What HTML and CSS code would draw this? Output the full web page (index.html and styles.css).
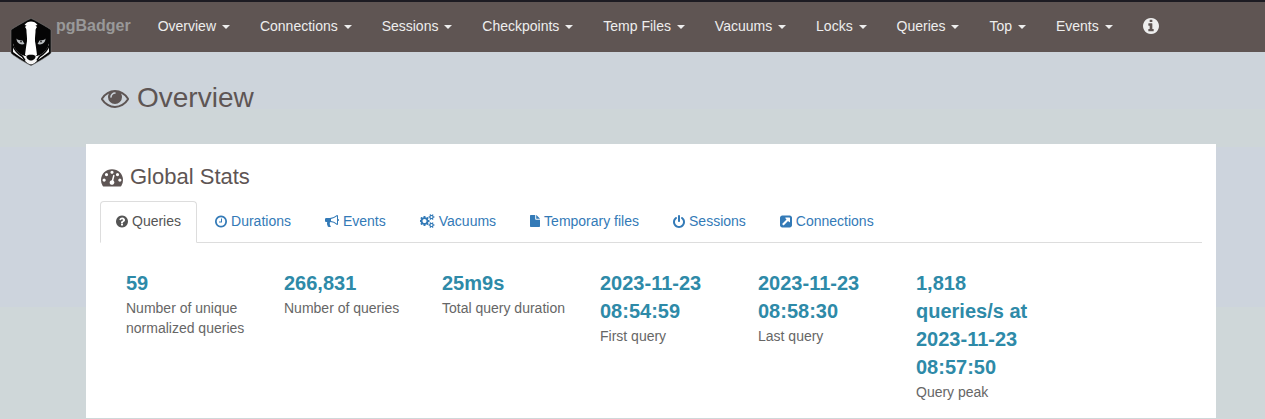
FILE: index.html
```
<!DOCTYPE html>
<html lang="en">
<head>
<meta charset="utf-8">
<title>pgBadger</title>
<link rel="stylesheet" href="styles.css">
</head>
<body>
<header class="navbar">
  <a class="brand" href="#">
    <svg class="logo" viewBox="0 0 42 48" aria-hidden="true">
      <path d="M21 .5C22 .5 40 10.500 41 12v23c-1 2-19 12.500-20 12.500S2 37 1 35V12C2 10.500 20 .5 21 .5z" fill="#050505" stroke="#777" stroke-width=".6"/>
      <path d="M21 3.500c-2.500 0-5 1-6.500 3.500l2 .5-1.500 1.500c1.500 1.500 1.500 3 1.500 5 .4 5 1 8 0 12-.5 3-1 7-1.500 11h12c-.5-4-1-8-1.500-11-1-4-.4-7 0-12 0-2 0-3.500 1.500-5l-1.500-1.500 2-.5c-1.500-2.500-4-3.500-6.500-3.500z" fill="#fff"/>
      <path d="M3 25.500V34c3.500 3 7.500 5 11 8 2 2 4.500 4.500 7 4.500s5-2.500 7-4.500c3.500-3 7.500-5 11-8v-8.500c-1 5-4.500 8.500-8 11L27 38l-3-2h-6l-3 2-4-1.500c-3.500-2.500-7-6-8-11z" fill="#f5f5f5"/>
      <path d="M3 27.500c1.500 5 5.500 8.500 9.500 11l2.500 4M39 27.500c-1.500 5-5.500 8.500-9.500 11l-2.500 4" fill="none" stroke="#080808" stroke-width="1.500"/>
      <path d="M16.500 38c1.500-1.600 7.500-1.600 9 0 .4 2-1.700 4.500-4.500 4.500s-4.900-2.500-4.500-4.500z" fill="#080808"/>
      <path d="M6.500 20.500c1 1.500 3 1.500 6 2L14.500 26c-4 1.500-8-1-8-5.500zM35.500 20.500c-1 1.500-3 1.500-6 2L27.500 26c4 1.500 8-1 8-5.500z" fill="#b9bdc0"/>
      <circle cx="11" cy="23.500" r="1" fill="#333"/>
      <circle cx="31" cy="23.500" r="1" fill="#333"/>
    </svg>
    <span>pgBadger</span>
  </a>
  <nav class="menu" aria-label="Main">
    <a href="#">Overview <b class="caret"></b></a>
    <a href="#">Connections <b class="caret"></b></a>
    <a href="#">Sessions <b class="caret"></b></a>
    <a href="#">Checkpoints <b class="caret"></b></a>
    <a href="#">Temp Files <b class="caret"></b></a>
    <a href="#">Vacuums <b class="caret"></b></a>
    <a href="#">Locks <b class="caret"></b></a>
    <a href="#">Queries <b class="caret"></b></a>
    <a href="#">Top <b class="caret"></b></a>
    <a href="#">Events <b class="caret"></b></a>
    <a class="about" href="#" aria-label="About"><svg viewBox="128 128 1536 1536"><path d="M1152 1376v-160q0-14-9-23t-23-9h-96v-512q0-14-9-23t-23-9h-320q-14 0-23 9t-9 23v160q0 14 9 23t23 9h96v320h-96q-14 0-23 9t-9 23v160q0 14 9 23t23 9h448q14 0 23-9t9-23zm-128-896v-160q0-14-9-23t-23-9h-192q-14 0-23 9t-9 23v160q0 14 9 23t23 9h192q14 0 23-9t9-23zm640 416q0 209-103 385.500t-279.500 279.500-385.500 103-385.500-103-279.500-279.500-103-385.500 103-385.500 279.500-279.500 385.500-103 385.500 103 279.500 279.500 103 385.500z"/></svg></a>
  </nav>
</header>

<main class="content">
  <h1 class="page-title">
    <svg class="icon" viewBox="0 0 1792 1792" aria-hidden="true"><path d="M1664 960q-152-236-381-353 61 104 61 225 0 185-131.500 316.500t-316.500 131.500-316.500-131.500-131.500-316.500q0-121 61-225-229 117-381 353 133 205 333.500 326.500t434.500 121.500 434.500-121.500 333.500-326.500zm-720-384q0-20-14-34t-34-14q-125 0-214.500 89.500t-89.500 214.500q0 20 14 34t34 14 34-14 14-34q0-86 61-147t147-61q20 0 34-14t14-34zm848 384q0 34-20 69-140 230-376.500 368.500t-499.500 138.500-499.500-139-376.500-368q-20-35-20-69t20-69q140-229 376.500-368t499.500-139 499.500 139 376.500 368q20 35 20 69z"/></svg>
    <span>Overview</span>
  </h1>

  <section class="panel">
    <h2 class="panel-title">
      <svg class="icon" viewBox="0 0 1792 1792" aria-hidden="true"><path d="M384 1152q0-53-37.500-90.500t-90.500-37.500-90.500 37.500-37.500 90.500 37.500 90.500 90.500 37.500 90.500-37.500 37.500-90.500zm192-448q0-53-37.500-90.500t-90.500-37.500-90.500 37.500-37.500 90.500 37.500 90.500 90.500 37.500 90.500-37.500 37.500-90.500zm428 481l101-382q6-26-7.500-48.500t-38.500-29.500-48 6.500-30 39.500l-101 382q-60 5-107 43.500t-63 98.500q-20 77 20 146t117 89 146-20 89-117q16-60-6-117t-72-91zm660-33q0-53-37.500-90.500t-90.500-37.500-90.500 37.500-37.500 90.500 37.500 90.500 90.500 37.500 90.500-37.500 37.500-90.500zm-640-640q0-53-37.500-90.500t-90.500-37.500-90.500 37.500-37.500 90.500 37.500 90.500 90.500 37.500 90.500-37.500 37.500-90.500zm448 192q0-53-37.500-90.500t-90.500-37.500-90.500 37.500-37.500 90.500 37.500 90.500 90.500 37.500 90.500-37.500 37.500-90.500zm320 448q0 261-141 483-19 29-54 29h-1402q-35 0-54-29-141-221-141-483 0-182 71-348t191-286 286-191 348-71 348 71 286 191 191 286 71 348z"/></svg>
      <span>Global Stats</span>
    </h2>

    <nav class="tabs" aria-label="Global Stats">
      <a class="tab active" href="#"><svg class="icon-12" viewBox="128 128 1536 1536" aria-hidden="true"><path d="M1024 1376v-192q0-14-9-23t-23-9h-192q-14 0-23 9t-9 23v192q0 14 9 23t23 9h192q14 0 23-9t9-23zm256-672q0-88-55.500-163t-138.500-116-170-41q-243 0-371 213-15 24 8 42l132 100q7 6 19 6 16 0 25-12 53-68 86-92 34-24 86-24 48 0 85.500 26t37.500 59q0 38-20 61t-68 45q-63 28-115.500 86.500t-52.500 125.500v36q0 14 9 23t23 9h192q14 0 23-9t9-23q0-19 21.500-49.500t54.500-49.500q32-18 49-28.500t46-35 44.500-48 28-60.500 12.500-81zm384 192q0 209-103 385.500t-279.500 279.500-385.500 103-385.500-103-279.500-279.500-103-385.500 103-385.500 279.500-279.500 385.500-103 385.500 103 279.500 279.500 103 385.500z"/></svg>Queries</a>
      <a class="tab" href="#"><svg class="icon-12" viewBox="128 128 1536 1536" aria-hidden="true"><path d="M1024 544v448q0 14-9 23t-23 9h-320q-14 0-23-9t-9-23v-64q0-14 9-23t23-9h224v-352q0-14 9-23t23-9h64q14 0 23 9t9 23zm416 352q0-148-73-273t-198-198-273-73-273 73-198 198-73 273 73 273 198 198 273 73 273-73 198-198 73-273zm224 0q0 209-103 385.500t-279.500 279.500-385.500 103-385.500-103-279.500-279.500-103-385.500 103-385.500 279.500-279.500 385.500-103 385.500 103 279.500 279.500 103 385.500z"/></svg>Durations</a>
      <a class="tab" href="#"><svg class="icon-14" viewBox="0 0 1792 1792" aria-hidden="true"><path d="M1664 640q53 0 90.500 37.500t37.500 90.500-37.500 90.500-90.500 37.500v384q0 52-38 90t-90 38q-417-347-812-380-58 19-91 66t-31 100.500 40 92.500q-20 33-23 65.500t6 58 33.500 55 48 50 61.500 50.500q-29 58-111.500 83t-168.500 11.500-132-55.500q-7-23-29.500-87.500t-32-94.500-23-89-15-101 3.500-98.500 22-110.500h-122q-66 0-113-47t-47-113v-192q0-66 47-113t113-47h480q435 0 896-384 52 0 90 38t38 90v384zm-128 604v-954q-394 302-768 343v270q377 42 768 341z"/></svg>Events</a>
      <a class="tab" href="#"><svg class="icon-15" viewBox="0 0 1920 1792" aria-hidden="true"><path d="M832 896q0-106-75-181t-181-75-181 75-75 181 75 181 181 75 181-75 75-181zm768 512q0-52-38-90t-90-38-90 38-38 90q0 53 37.500 90.500t90.500 37.500 90.500-37.500 37.500-90.500zm0-1024q0-52-38-90t-90-38-90 38-38 90q0 53 37.500 90.500t90.500 37.500 90.500-37.500 37.500-90.500zm-384 421v185q0 10-7 19.500t-16 10.500l-155 24q-11 35-32 76 34 48 90 115 7 11 7 20 0 12-7 19-23 30-82.500 89.500t-78.500 59.500q-11 0-21-7l-115-90q-37 19-77 31-11 108-23 155-7 24-30 24h-186q-11 0-20-7.500t-10-17.500l-23-153q-34-10-75-31l-118 89q-7 7-20 7-11 0-21-8-144-133-144-160 0-9 7-19 10-14 41-53t47-61q-23-44-35-82l-152-24q-10-1-17-9.500t-7-19.500v-185q0-10 7-19.500t16-10.500l155-24q11-35 32-76-34-48-90-115-7-11-7-20 0-12 7-20 22-30 82-89t79-59q11 0 21 7l115 90q34-18 77-32 11-108 23-154 7-24 30-24h186q11 0 20 7.500t10 17.500l23 153q34 10 75 31l118-89q8-7 20-7 11 0 21 8 144 133 144 160 0 8-7 19-12 16-42 54t-45 60q23 48 34 82l152 23q10 2 17 10.500t7 19.500zm640 533v140q0 16-149 31-12 27-30 52 51 113 51 138 0 4-4 7-122 71-124 71-8 0-46-47t-52-68q-20 2-30 2t-30-2q-14 21-52 68t-46 47q-2 0-124-71-4-3-4-7 0-25 51-138-18-25-30-52-149-15-149-31v-140q0-16 149-31 13-29 30-52-51-113-51-138 0-4 4-7 4-2 35-20t59-34 30-16q8 0 46 46.500t52 67.500q20-2 30-2t30 2q51-71 92-112l6-2q4 0 124 70 4 3 4 7 0 25-51 138 17 23 30 52 149 15 149 31zm0-1024v140q0 16-149 31-12 27-30 52 51 113 51 138 0 4-4 7-122 71-124 71-8 0-46-47t-52-68q-20 2-30 2t-30-2q-14 21-52 68t-46 47q-2 0-124-71-4-3-4-7 0-25 51-138-18-25-30-52-149-15-149-31v-140q0-16 149-31 13-29 30-52-51-113-51-138 0-4 4-7 4-2 35-20t59-34 30-16q8 0 46 46.500t52 67.500q20-2 30-2t30 2q51-71 92-112l6-2q4 0 124 70 4 3 4 7 0 25-51 138 17 23 30 52 149 15 149 31z"/></svg>Vacuums</a>
      <a class="tab" href="#"><svg class="icon-10" viewBox="0 0 10 12" aria-hidden="true"><path d="M.7 0H5.200V4.100a.7.7 0 0 0 .7.700H10v6.500a.7.7 0 0 1-.7.700H.7A.7.7 0 0 1 0 11.300V.7A.7.7 0 0 1 .7 0zM6.200 0l.4.300 3 3 .3.500H6.200z"/></svg>Temporary files</a>
      <a class="tab" href="#"><svg class="icon-12" viewBox="128 0 1536 1664" aria-hidden="true"><path d="M1664 896q0 156-61 298t-164 245-245 164-298 61-298-61-245-164-164-245-61-298q0-182 80.500-343t226.500-270q43-32 95.500-25t83.500 50q32 42 24.500 94.500t-49.500 84.500q-98 74-151.500 181t-53.500 228q0 104 40.500 198.500t109.500 163.500 163.500 109.500 198.500 40.500 198.500-40.500 163.500-109.500 109.500-163.500 40.500-198.500q0-121-53.500-228t-151.500-181q-42-32-49.500-84.500t24.500-94.500q31-43 84-50t95 25q146 109 226.500 270t80.500 343zm-640-768v640q0 52-38 90t-90 38-90-38-38-90v-640q0-52 38-90t90-38 90 38 38 90z"/></svg>Sessions</a>
      <a class="tab" href="#"><svg class="icon-12" viewBox="128 128 1536 1536" aria-hidden="true"><path d="M1408 928v-480q0-26-19-45t-45-19h-480q-42 0-59 39-17 41 14 70l144 144-534 534q-19 19-19 45t19 45l102 102q19 19 45 19t45-19l534-534 144 144q18 19 45 19 12 0 25-5 39-17 39-59zm256-512v960q0 119-84.500 203.500t-203.500 84.500h-960q-119 0-203.500-84.500t-84.500-203.500v-960q0-119 84.500-203.500t203.500-84.500h960q119 0 203.500 84.500t84.500 203.500z"/></svg>Connections</a>
    </nav>

    <ul class="stats">
      <li><span class="figure">59</span><span class="label">Number of unique normalized queries</span></li>
      <li><span class="figure">266,831</span><span class="label">Number of queries</span></li>
      <li><span class="figure">25m9s</span><span class="label">Total query duration</span></li>
      <li><span class="figure">2023-11-23 08:54:59</span><span class="label">First query</span></li>
      <li><span class="figure">2023-11-23 08:58:30</span><span class="label">Last query</span></li>
      <li><span class="figure">1,818 queries/s at 2023-11-23 08:57:50</span><span class="label">Query peak</span></li>
    </ul>
  </section>
</main>
</body>
</html>
```
FILE: styles.css
```
* { box-sizing: border-box; }

body {
  margin: 0;
  font: 14px/20px "Liberation Sans", Arial, sans-serif;
  color: #5e5554;
  background: linear-gradient(#cdd4db 109px, #ced6d8 109px, #ced6d8 147px, #cdd4dd 147px, #cdd4dd 307px, #cfd7d9 307px);
}

a { text-decoration: none; }
svg { fill: currentColor; flex: none; }

.navbar {
  display: flex;
  height: 52px;
  padding-left: 10px;
  border-top: 2px solid #1c1b22;
  background: #5f5553;
}

.brand {
  display: flex;
  gap: 4px;
  padding-right: 12px;
  color: #999;
  font-size: 16px;
  font-weight: bold;
}
.brand span { padding-top: 14px; }
.logo { width: 42px; height: 48px; margin-top: 16px; }

.menu { display: flex; }
.menu a { padding: 14px 15px 0; color: #eee; white-space: nowrap; }
.caret {
  display: inline-block;
  margin-left: 2px;
  vertical-align: middle;
  border-top: 4px solid;
  border-right: 4px solid transparent;
  border-left: 4px solid transparent;
}
.menu .about { padding-top: 16px; }
.about svg { display: block; width: 16px; height: 16px; }

.content { padding: 30px 49px 0 86px; }

.page-title, .panel-title {
  display: flex;
  align-items: center;
  margin: 0;
  font-weight: normal;
}
.page-title { gap: 8px; padding-left: 15px; font-size: 28px; line-height: 32px; }
.page-title .icon { width: 28px; height: 28px; }
.panel-title { gap: 7px; padding-left: 1px; font-size: 22px; line-height: 24px; }
.panel-title .icon { width: 22px; height: 22px; }

.panel {
  margin: 30px 0 1px;
  padding: 21px 14px 16px;
  background: #fff;
}

.tabs {
  display: flex;
  gap: 2px;
  margin-top: 12px;
  border-bottom: 1px solid #ddd;
}
.tab {
  display: flex;
  align-items: center;
  gap: 4px;
  margin-bottom: -1px;
  padding: 9px 15px 11px;
  border: 1px solid transparent;
  border-radius: 4px 4px 0 0;
  color: #337ab7;
  white-space: nowrap;
}
.tab.active {
  border-color: #ddd #ddd #fff;
  background: #fff;
  color: #555;
}
.icon-10 { width: 10px; height: 12px; }
.icon-12 { width: 12px; height: 13px; }
.icon-14 { width: 14px; height: 14px; }
.icon-15 { width: 15px; height: 14px; }

.stats {
  display: flex;
  gap: 30px;
  margin: 26px 0 0;
  padding: 0 0 0 26px;
  list-style: none;
}
.stats li { width: 128px; }
.figure, .label { display: block; }
.figure {
  margin-bottom: 1px;
  color: #2e8aa8;
  font-size: 20px;
  font-weight: bold;
  line-height: 28px;
}
.label { color: #666; }
```
